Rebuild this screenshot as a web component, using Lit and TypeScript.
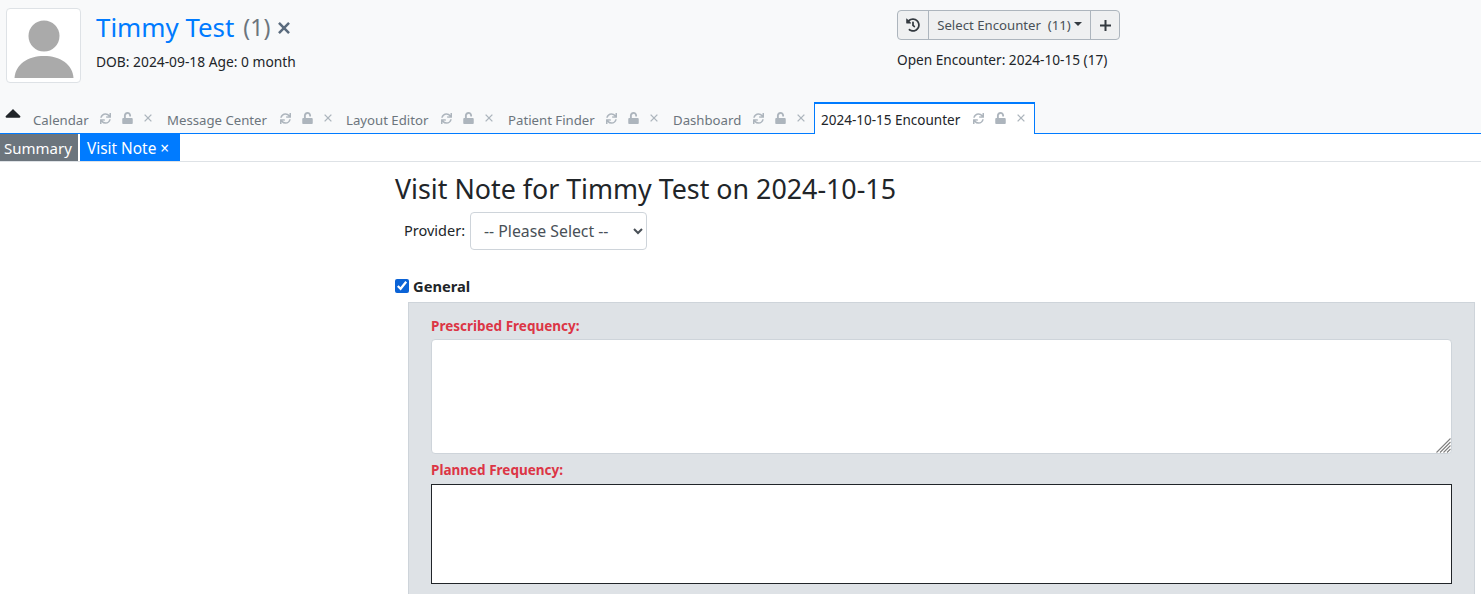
import { LitElement, html, css, svg } from "lit";
import { customElement } from "lit/decorators.js";

const P = {
  sync: "M440.65 12.57l4 82.77A247.16 247.16 0 0 0 255.83 8C134.73 8 33.91 94.92 12.29 209.82A12 12 0 0 0 24.09 224h49.05a12 12 0 0 0 11.67-9.26 175.91 175.91 0 0 1 317-56.94l-101.46-4.86a12 12 0 0 0-12.57 12v47.41a12 12 0 0 0 12 12H500a12 12 0 0 0 12-12V12a12 12 0 0 0-12-12h-47.37a12 12 0 0 0-11.98 12.57zM255.83 432a175.61 175.61 0 0 1-146-77.8l101.8 4.87a12 12 0 0 0 12.57-12v-47.4a12 12 0 0 0-12-12H12a12 12 0 0 0-12 12V500a12 12 0 0 0 12 12h47.35a12 12 0 0 0 12-12.6l-4.15-82.57A247.17 247.17 0 0 0 255.83 504c121.11 0 221.93-86.92 243.55-201.82a12 12 0 0 0-11.8-14.18h-49.05a12 12 0 0 0-11.67 9.26A175.86 175.86 0 0 1 255.83 432z",
  unlock: "M400 256H152V152.9c0-39.6 31.7-72.5 71.3-72.9 40-.4 72.7 32.1 72.7 72v16c0 13.3 10.7 24 24 24h32c13.3 0 24-10.7 24-24v-16C376 68 307.5-.3 223.5 0 139.5.3 72 69.5 72 153.5V256H48c-26.5 0-48 21.5-48 48v160c0 26.5 21.5 48 48 48h352c26.5 0 48-21.5 48-48V304c0-26.5-21.5-48-48-48z",
  history: "M504 255.531c.253 136.64-111.18 248.372-247.82 248.468-59.015.042-113.223-20.53-155.822-54.911-11.077-8.94-11.905-25.541-1.839-35.607l11.267-11.267c8.609-8.609 22.353-9.551 31.891-1.984C173.062 425.135 212.781 440 256 440c101.705 0 184-82.311 184-184 0-101.705-82.311-184-184-184-48.814 0-93.149 18.969-126.068 49.932l50.754 50.754c10.08 10.08 2.941 27.314-11.313 27.314H24c-8.837 0-16-7.163-16-16V38.627c0-14.254 17.234-21.393 27.314-11.314l49.372 49.372C129.209 34.136 189.552 8 256 8c136.81 0 247.747 110.78 248 247.531zm-180.912 78.784l9.823-12.63c8.138-10.463 6.253-25.542-4.21-33.679L288 256.349V152c0-13.255-10.745-24-24-24h-16c-13.255 0-24 10.745-24 24v135.651l65.409 50.874c10.463 8.137 25.541 6.253 33.679-4.21z",
  caretUp: "M288.662 352H31.338c-17.818 0-26.741-21.543-14.142-34.142l128.662-128.662c7.81-7.81 20.474-7.81 28.284 0l128.662 128.662c12.6 12.599 3.676 34.142-14.142 34.142z",
};

const icon = (d: string, vw: number, cls: string) =>
  html`<svg class=${cls} viewBox="0 0 ${vw} 512" aria-hidden="true">${svg`<path fill="currentColor" d=${d}></path>`}</svg>`;

const cross = (w: number, cls: string) =>
  html`<svg class=${cls} viewBox="0 0 10 10" aria-hidden="true">${svg`<path d="M0.8 0.8L9.2 9.2M9.2 0.8L0.8 9.2" stroke="currentColor" stroke-width=${w} fill="none"></path>`}</svg>`;

const TABS = [
  { label: "Calendar", w: 134, t: 54 },
  { label: "Message Center", w: 179, t: 100 },
  { label: "Layout Editor", w: 162, t: 82 },
  { label: "Patient Finder", w: 165, t: 85 },
  { label: "Dashboard", w: 148, t: 67 },
  { label: "2024-10-15 Encounter", w: 221, t: 139, active: true },
];

@customElement("app-root")
export class AppRoot extends LitElement {
  static styles = css`
    :host {
      display: block;
      height: 594px;
      overflow: hidden;
      background: #fff;
      color: #212529;
      font-family: "Noto Sans", "Open Sans", sans-serif;
      font-size: 13.2px;
    }
    * { box-sizing: border-box; }
    .top { background: #f8f9fa; height: 134px; display: flex; flex-direction: column; }
    .header { height: 102px; display: grid; grid-template-columns: 897px 1fr; }
    .patient { display: flex; padding: 8px 0 0 6px; gap: 15px; }
    .avatar {
      width: 75px; height: 75px; background: #fff; border: 1px solid #dee2e6; border-radius: 4px;
      display: flex; align-items: center; justify-content: center;
    }
    .avatar svg { width: 60px; height: 60px; display: block; margin-top: 5px; }
    .name { display: flex; align-items: center; height: 39px; line-height: 39px; }
    .name a { color: #007bff; font-size: 25.9px; }
    .name .count { color: #6c757d; font-size: 23px; margin-left: 9px; }
    .name svg { width: 12px; height: 12px; color: #5a6b7d; margin-left: 8px; }
    .dob { margin-top: 5px; line-height: 20px; font-size: 13.8px; }
    .enc { padding-top: 10px; }
    .btns {
      display: inline-flex; height: 30px; border: 1px solid #adb5bd; border-radius: 4px;
      background: #eff0f1; color: #343a40; align-items: stretch; width: 223px;
    }
    .btns > div { display: flex; align-items: center; justify-content: center; }
    .btns .hist { width: 31px; border-right: 1px solid #adb5bd; }
    .btns .hist svg { width: 14px; height: 14px; }
    .btns .sel { width: 162px; border-right: 1px solid #adb5bd; font-size: 13.2px; white-space: pre; color: #495057; }
    .btns .sel i {
      display: inline-block; margin-left: 3px; border-top: 4px solid #343a40;
      border-left: 4px solid transparent; border-right: 4px solid transparent; margin-bottom: 2px;
    }
    .btns .add { flex: 1; }
    .btns .add svg { width: 11px; height: 11px; display: block; }
    .open { margin-top: 10px; line-height: 20px; font-size: 13.65px; }
    .tabs { height: 32px; display: flex; border-bottom: 1px solid #007bff; align-items: stretch; }
    .caret { width: 26px; color: #212529; }
    .caret svg { width: 16px; height: 26px; display: block; margin: -2px 0 0 5px; }
    .tab {
      display: flex; align-items: center; padding: 4px 7px 0; color: #6c757d; white-space: nowrap;
      height: 31px;
    }
    .tab .label { display: block; }
    .tab svg { color: #adb5bd; display: block; flex: none; }
    .tab .i1 { width: 11px; height: 11px; margin: -3px 0 0 13px; }
    .tab .i2 { width: 11px; height: 12px; margin: -3px 0 0 11px; }
    .tab .i3 { width: 8px; height: 8px; margin: -3px 0 0 11px; }
    .tab.active {
      background: #fff; color: #212529; border: 1px solid #007bff; border-width: 2px 1px 0 1px;
      height: 32px; padding: 1px 6px 0; margin-bottom: -1px; font-size: 13.5px;
    }
    .sub { height: 28px; display: flex; gap: 2px; border-bottom: 1px solid #dee2e6; background: #fff; }
    .sub div { height: 27px; line-height: 28px; color: #fff; font-size: 15px; padding: 0 4px; }
    .sub .s1 { background: #6c757d; width: 78px; }
    .sub .s2 { background: #007bff; width: 100px; padding-left: 7px; font-size: 15.4px; line-height: 29px; }
    .main { padding: 0 6px 0 395px; }
    h1 { margin: 0; font-size: 26.8px; font-weight: 400; line-height: 34px; padding-top: 10px; height: 50px; white-space: nowrap; }
    .prov { display: flex; align-items: center; height: 38px; padding-left: 9px; gap: 5px; }
    .prov label { margin-bottom: 2px; font-size: 14.5px; }
    select {
      width: 177px; height: 38px; border: 1px solid #ced4da; border-radius: 4px; background: #fff;
      color: #495057; font: inherit; font-size: 15.8px; padding: 0 9px;
    }
    .gen { display: flex; align-items: center; height: 20px; margin-top: 26px; gap: 4px; font-weight: 700; font-size: 14.7px; }
    .gen input { width: 14px; height: 14px; margin: 0; accent-color: #0b63d6; }
    .panel {
      margin: 6px 0 0 13px; background: #dee2e6; border: 1px solid #ced4da; border-bottom: 0;
      padding: 13px 22px 0; height: 300px;
    }
    .lbl { color: #dc3545; font-weight: 700; font-size: 13.5px; line-height: 20px; height: 22px; }
    .lbl.first { height: 23px; }
    .wrap { position: relative; margin-bottom: 6px; }
    .wrap svg { position: absolute; right: 1px; bottom: 1px; width: 15px; height: 15px; display: block; }
    textarea { display: block; width: 100%; background: #fff; margin: 0; padding: 6px 12px; font: inherit; resize: none; }
    .t1 { height: 115px; border: 1px solid #ced4da; border-radius: 4px; }
    .t2 { height: 100px; border: 1px solid #212529; border-radius: 0; margin-top: 2px; }
  `;

  render() {
    return html`
      <div class="top">
        <div class="header">
          <div class="patient">
            <div class="avatar">
              <svg viewBox="0 0 60 60" aria-hidden="true">
                <circle cx="30" cy="18" r="15.5" fill="#aaa"></circle>
                <path fill="#aaa" d="M0.5 60 C1.5 46 14 38 30 38 C46 38 58.5 46 59.5 60 Z"></path>
              </svg>
            </div>
            <div>
              <div class="name"><a>Timmy Test</a><span class="count">(1)</span>${cross(2.1, "")}</div>
              <div class="dob">DOB: 2024-09-18 Age: 0 month</div>
            </div>
          </div>
          <div class="enc">
            <div class="btns">
              <div class="hist">${icon(P.history, 512, "")}</div>
              <div class="sel">Select Encounter  (11)<i></i></div>
              <div class="add">
                <svg viewBox="0 0 11 11" aria-hidden="true"><path d="M5.5 0V11M0 5.5H11" stroke="#343a40" stroke-width="2" fill="none"></path></svg>
              </div>
            </div>
            <div class="open">Open Encounter: 2024-10-15 (17)</div>
          </div>
        </div>
        <div class="tabs">
          <div class="caret">${icon(P.caretUp, 320, "")}</div>
          ${TABS.map(
            (t) => html`<div class="tab ${t.active ? "active" : ""}" style="width:${t.w}px">
              <span class="label" style="width:${t.t}px">${t.label}</span>
              ${icon(P.sync, 512, "i1")}${icon(P.unlock, 448, "i2")}${cross(1.7, "i3")}
            </div>`
          )}
        </div>
      </div>
      <div class="sub">
        <div class="s1">Summary</div>
        <div class="s2">Visit Note ×</div>
      </div>
      <div class="main">
        <h1>Visit Note for Timmy Test on 2024-10-15</h1>
        <div class="prov">
          <label>Provider:</label>
          <select><option>-- Please Select --</option></select>
        </div>
        <div class="gen"><input type="checkbox" checked /><span>General</span></div>
        <div class="panel">
          <div class="lbl first">Prescribed Frequency:</div>
          <div class="wrap">
            <textarea class="t1"></textarea>
            <svg viewBox="0 0 15 15" aria-hidden="true"><path d="M0.5 14.5L14.5 0.5M4 14.5L14.5 4M7.5 14.5L14.5 7.5M11 14.5L14.5 11" stroke="#808080" stroke-width="1.1" fill="none"></path></svg>
          </div>
          <div class="lbl">Planned Frequency:</div>
          <textarea class="t2"></textarea>
        </div>
      </div>
    `;
  }
}
